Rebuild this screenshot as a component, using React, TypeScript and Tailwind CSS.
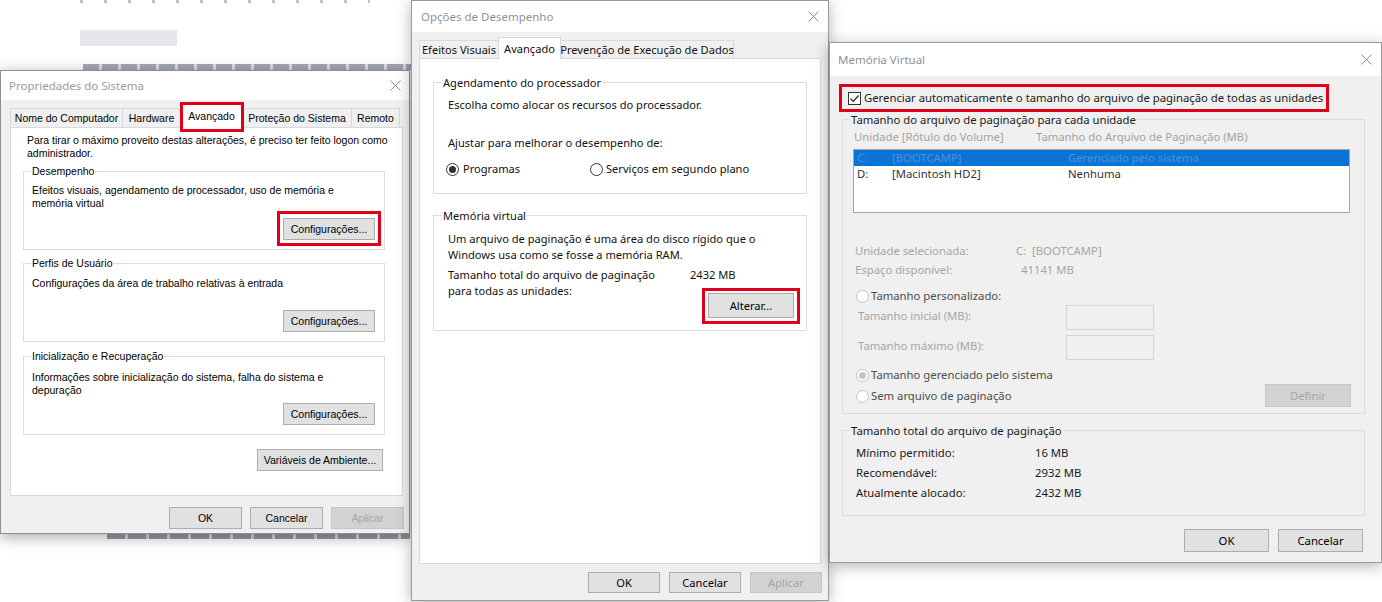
import React from "react";

function CloseX() {
  return (
    <svg width="11" height="11" viewBox="0 0 11 11" className="shrink-0">
      <path d="M0.5 0.5 L10.5 10.5 M10.5 0.5 L0.5 10.5" stroke="#8c8c8c" strokeWidth="1" fill="none" />
    </svg>
  );
}

function Btn({ children, className = "", disabled = false }: { children: React.ReactNode; className?: string; disabled?: boolean }) {
  return (
    <div
      className={`flex shrink-0 items-center justify-center border ${
        disabled ? "border-[#c6c6c6] bg-[#d2d2d2] text-[#a5a5a5]" : "border-[#adadad] bg-[#e1e1e1] text-black"
      } ${className}`}
    >
      {children}
    </div>
  );
}

// red annotation frame drawn over a control
function Highlight({ className }: { className: string }) {
  return <div className={`pointer-events-none absolute border-[3px] border-[#e1001a] ${className}`} />;
}

function Radio({ checked = false, disabled = false }: { checked?: boolean; disabled?: boolean }) {
  return (
    <span
      className={`flex h-[13px] w-[13px] shrink-0 items-center justify-center rounded-full border bg-white ${
        disabled ? "border-[#c4c4c4]" : "border-[#333333]"
      }`}
    >
      {checked && <span className={`h-[7px] w-[7px] rounded-full ${disabled ? "bg-[#c4c4c4]" : "bg-[#333333]"}`} />}
    </span>
  );
}

function Checkbox() {
  return (
    <span className="flex h-[13px] w-[13px] shrink-0 items-center justify-center border border-[#333333] bg-white">
      <svg width="11" height="11" viewBox="0 0 11 11">
        <path d="M1.5 5.5 L4.2 8.3 L9.5 2.5" stroke="#222" strokeWidth="1.2" fill="none" />
      </svg>
    </span>
  );
}

function Tab({ children, className = "" }: { children: React.ReactNode; className?: string }) {
  return (
    <div className={`flex shrink-0 items-center justify-center whitespace-nowrap border border-b-0 border-[#d9d9d9] bg-[#f0f0f0] ${className}`}>
      {children}
    </div>
  );
}

function SystemProperties() {
  return (
    <div className="absolute left-0 top-[70px] flex h-[464px] w-[410px] flex-col border border-[#8f8f8f] bg-[#f0f0f0] font-['Liberation_Sans',Arial,sans-serif] text-[10.5px] leading-[13px] text-black shadow-[0_3px_14px_rgba(0,0,0,0.35)]">
      <div className="flex h-[29px] shrink-0 items-center justify-between bg-white pl-[8px] pr-[8px]">
        <span className="font-['Noto_Sans',sans-serif] text-[11.5px] text-[#9b9b9b]">Propriedades do Sistema</span>
        <CloseX />
      </div>

      <div className="flex h-[27px] shrink-0 items-end pl-[9px]">
        <Tab className="h-[19px] w-[113px]">Nome do Computador</Tab>
        <Tab className="-ml-px h-[19px] w-[59px]">Hardware</Tab>
        <div className="relative z-10 -mb-px -ml-px flex h-[24px] w-[63px] shrink-0 items-center justify-center border border-b-0 border-[#d9d9d9] bg-white">
          Avançado
          <Highlight className="-bottom-[4px] -left-[1px] -right-[2px] -top-[3px]" />
        </div>
        <Tab className="-ml-px h-[19px] w-[110px]">Proteção do Sistema</Tab>
        <Tab className="-ml-px h-[19px] w-[49px]">Remoto</Tab>
      </div>

      <div className="ml-[9px] flex h-[369px] w-[393px] shrink-0 flex-col border border-[#d9d9d9] bg-white pt-[6px]">
        <p className="whitespace-nowrap pl-[16px]">
          Para tirar o máximo proveito destas alterações, é preciso ter feito logon como
          <br />
          administrador.
        </p>

        <div className="ml-[12px] mt-[11px] flex h-[79px] w-[362px] shrink-0 flex-col border border-[#dcdcdc]">
          <span className="-mt-[7px] ml-[7px] self-start bg-white px-px">Desempenho</span>
          <p className="mt-[6px] whitespace-nowrap pl-[8px]">
            Efeitos visuais, agendamento de processador, uso de memória e
            <br />
            memória virtual
          </p>
          <div className="relative mb-[9px] mr-[9px] mt-auto self-end">
            <Btn className="h-[22px] w-[92px]">Configurações...</Btn>
            <Highlight className="-bottom-[6px] -left-[6px] -right-[6px] -top-[7px]" />
          </div>
        </div>

        <div className="ml-[12px] mt-[13px] flex h-[79px] w-[362px] shrink-0 flex-col border border-[#dcdcdc]">
          <span className="-mt-[7px] ml-[7px] self-start bg-white px-px">Perfis de Usuário</span>
          <p className="mt-[7px] whitespace-nowrap pl-[8px]">Configurações da área de trabalho relativas à entrada</p>
          <Btn className="mb-[9px] mr-[9px] mt-auto h-[22px] w-[92px] self-end">Configurações...</Btn>
        </div>

        <div className="ml-[12px] mt-[14px] flex h-[79px] w-[362px] shrink-0 flex-col border border-[#dcdcdc]">
          <span className="-mt-[7px] ml-[7px] self-start bg-white px-px">Inicialização e Recuperação</span>
          <p className="mt-[8px] whitespace-nowrap pl-[8px]">
            Informações sobre inicialização do sistema, falha do sistema e
            <br />
            depuração
          </p>
          <Btn className="mb-[9px] mr-[9px] mt-auto h-[22px] w-[92px] self-end">Configurações...</Btn>
        </div>

        <Btn className="mr-[19px] mt-[14px] h-[22px] w-[126px] self-end">Variáveis de Ambiente...</Btn>
      </div>

      <div className="mt-[11px] flex justify-end gap-[8px] pr-[5px]">
        <Btn className="h-[22px] w-[73px]">OK</Btn>
        <Btn className="h-[22px] w-[73px]">Cancelar</Btn>
        <Btn disabled className="h-[22px] w-[73px]">Aplicar</Btn>
      </div>
    </div>
  );
}

function PerformanceOptions() {
  return (
    <div className="absolute left-[411px] top-0 flex h-[601px] w-[418px] flex-col border border-[#9a9a9a] bg-[#f0f0f0] font-['Noto_Sans',sans-serif] text-[11.1px] leading-[16px] text-[#111] shadow-[0_3px_14px_rgba(0,0,0,0.3)]">
      <div className="flex h-[31px] shrink-0 items-center justify-between bg-white pl-[9px] pr-[9px]">
        <span className="text-[11.5px] text-[#929292]">Opções de Desempenho</span>
        <CloseX />
      </div>

      <div className="flex h-[26px] shrink-0 items-end pl-[7px]">
        <Tab className="h-[18px] w-[80px]">Efeitos Visuais</Tab>
        <div className="relative z-10 -mb-px -ml-px flex h-[22px] w-[63px] shrink-0 items-center justify-center border border-b-0 border-[#d9d9d9] bg-white">
          Avançado
        </div>
        <Tab className="-ml-px h-[18px] w-[174px]">Prevenção de Execução de Dados</Tab>
      </div>

      <div className="ml-[7px] flex h-[506px] w-[402px] shrink-0 flex-col border border-[#d9d9d9] bg-white">
        <div className="ml-[13px] mt-[23px] flex h-[112px] w-[374px] shrink-0 flex-col border border-[#dcdcdc]">
          <span className="-mt-[8px] ml-[8px] self-start bg-white px-px">Agendamento do processador</span>
          <p className="mt-[6px] pl-[14px]">Escolha como alocar os recursos do processador.</p>
          <p className="mt-[22px] pl-[14px]">Ajustar para melhorar o desempenho de:</p>
          <div className="mt-[10px] flex h-[16px] items-center pl-[12px]">
            <div className="flex w-[144px] items-center gap-[4px]">
              <Radio checked />
              <span>Programas</span>
            </div>
            <div className="flex items-center gap-[3px]">
              <Radio />
              <span>Serviços em segundo plano</span>
            </div>
          </div>
        </div>

        <div className="ml-[13px] mt-[21px] flex h-[116px] w-[374px] shrink-0 flex-col border border-[#dcdcdc]">
          <span className="-mt-[8px] ml-[8px] self-start bg-white px-px">Memória virtual</span>
          <p className="mt-[7px] whitespace-nowrap pl-[14px]">
            Um arquivo de paginação é uma área do disco rígido que o
            <br />
            Windows usa como se fosse a memória RAM.
          </p>
          <div className="mt-[4px] flex pl-[14px]">
            <p className="w-[242px] shrink-0">
              Tamanho total do arquivo de paginação
              <br />
              para todas as unidades:
            </p>
            <div className="flex flex-col items-start">
              <span>2432 MB</span>
              <div className="relative ml-[18px] mt-[10px]">
                <Btn className="h-[25px] w-[86px]">Alterar...</Btn>
                <Highlight className="-bottom-[6px] -left-[6px] -right-[6px] -top-[5px]" />
              </div>
            </div>
          </div>
        </div>
      </div>

      <div className="mt-[8px] flex justify-end gap-[9px] pr-[6px]">
        <Btn className="h-[21px] w-[72px]">OK</Btn>
        <Btn className="h-[21px] w-[72px]">Cancelar</Btn>
        <Btn disabled className="h-[21px] w-[72px]">Aplicar</Btn>
      </div>
    </div>
  );
}

function VirtualMemory() {
  return (
    <div className="absolute left-[829px] top-[42px] flex h-[521px] w-[553px] flex-col border border-[#9a9a9a] bg-[#f0f0f0] font-['Noto_Sans',sans-serif] text-[11.3px] leading-[16px] text-[#1a1a1a] shadow-[0_3px_14px_rgba(0,0,0,0.3)]">
      <div className="flex h-[33px] shrink-0 items-center justify-between bg-white pl-[8px] pr-[9px]">
        <span className="text-[11.5px] text-[#929292]">Memória Virtual</span>
        <CloseX />
      </div>

      <div className="relative ml-[18px] mt-[14px] flex h-[16px] items-center gap-[3px] self-start">
        <Checkbox />
        <span className="whitespace-nowrap">Gerenciar automaticamente o tamanho do arquivo de paginação de todas as unidades</span>
        <Highlight className="-bottom-[6px] -left-[9px] -right-[6px] -top-[6px]" />
      </div>

      <div className="ml-[12px] mt-[13px] flex h-[295px] w-[523px] shrink-0 flex-col border border-[#dcdcdc]">
        <span className="-mt-[8px] ml-[7px] self-start bg-[#f0f0f0] px-px">Tamanho do arquivo de paginação para cada unidade</span>
        <div className="mt-[1px] flex pl-[11px] text-[#a3a3a3]">
          <span className="w-[182px] shrink-0">Unidade [Rótulo do Volume]</span>
          <span>Tamanho do Arquivo de Paginação (MB)</span>
        </div>
        <div className="ml-[10px] mt-[4px] flex h-[64px] w-[497px] shrink-0 flex-col border border-[#a6a6a6] bg-white">
          <div className="flex h-[16px] items-center bg-[#0a74d4] pl-[3px] text-[#4a92dc]">
            <span className="w-[35px] shrink-0">C:</span>
            <span className="w-[176px] shrink-0">[BOOTCAMP]</span>
            <span>Gerenciado pelo sistema</span>
          </div>
          <div className="flex h-[16px] items-center pl-[3px] text-[#333]">
            <span className="w-[35px] shrink-0">D:</span>
            <span className="w-[176px] shrink-0">[Macintosh HD2]</span>
            <span>Nenhuma</span>
          </div>
        </div>

        <div className="mt-[30px] flex pl-[12px] text-[#a5a5a5]">
          <span className="w-[161px] shrink-0">Unidade selecionada:</span>
          <span>C:&nbsp;&nbsp;[BOOTCAMP]</span>
        </div>
        <div className="mt-[3px] flex pl-[12px] text-[#a5a5a5]">
          <span className="w-[161px] shrink-0">Espaço disponível:</span>
          <span className="pl-[5px]">41141 MB</span>
        </div>

        <div className="mt-[10px] flex h-[16px] items-center gap-[2px] pl-[13px] text-[#4d4d4d]">
          <Radio disabled />
          <span>Tamanho personalizado:</span>
        </div>
        <div className="mt-[1px] flex h-[25px] items-center pl-[15px] text-[#a5a5a5]">
          <span className="-mt-[3px] w-[208px] shrink-0">Tamanho inicial (MB):</span>
          <div className="h-[25px] w-[88px] border border-[#d4d4d4] bg-[#f0f0f0]" />
        </div>
        <div className="mt-[5px] flex h-[25px] items-center pl-[15px] text-[#a5a5a5]">
          <span className="-mt-[3px] w-[208px] shrink-0">Tamanho máximo (MB):</span>
          <div className="h-[25px] w-[88px] border border-[#d4d4d4] bg-[#f0f0f0]" />
        </div>

        <div className="mt-[7px] flex items-start justify-between">
          <div className="flex flex-col pl-[13px] text-[#4d4d4d]">
            <div className="flex h-[16px] items-center gap-[2px]">
              <Radio checked disabled />
              <span>Tamanho gerenciado pelo sistema</span>
            </div>
            <div className="mt-[5px] flex h-[16px] items-center gap-[2px]">
              <Radio disabled />
              <span>Sem arquivo de paginação</span>
            </div>
          </div>
          <Btn disabled className="mr-[13px] mt-[17px] h-[23px] w-[86px]">
            Definir
          </Btn>
        </div>
      </div>

      <div className="ml-[12px] mt-[16px] flex h-[86px] w-[523px] shrink-0 flex-col border border-[#dcdcdc]">
        <span className="-mt-[8px] ml-[7px] self-start bg-[#f0f0f0] px-px">Tamanho total do arquivo de paginação</span>
        <div className="mt-[4px] flex flex-col pl-[13px]">
          <div className="flex h-[20px] items-center">
            <span className="w-[179px] shrink-0">Mínimo permitido:</span>
            <span>16 MB</span>
          </div>
          <div className="flex h-[20px] items-center">
            <span className="w-[179px] shrink-0">Recomendável:</span>
            <span>2932 MB</span>
          </div>
          <div className="flex h-[20px] items-center">
            <span className="w-[179px] shrink-0">Atualmente alocado:</span>
            <span>2432 MB</span>
          </div>
        </div>
      </div>

      <div className="mt-[13px] flex justify-end gap-[9px] pr-[18px]">
        <Btn className="h-[23px] w-[85px]">OK</Btn>
        <Btn className="h-[23px] w-[85px]">Cancelar</Btn>
      </div>
    </div>
  );
}

export default function App() {
  return (
    <div className="relative h-[602px] w-[1382px] overflow-hidden bg-white">
      {/* blurred article content behind the dialogs */}
      <div className="flex flex-col pl-[80px]">
        <div className="h-[3px] w-[290px] bg-[repeating-linear-gradient(90deg,#a8a8a8_0_3px,transparent_3px_24px)] opacity-70" />
        <div className="mt-[27px] h-[16px] w-[97px] bg-[#e6e6ee]" />
        <div className="ml-[3px] mt-[18px] h-[6px] w-[328px] bg-[repeating-linear-gradient(90deg,#a4a8b8_0_16px,#dcdee8_16px_19px)]" />
        <div className="ml-[27px] mt-[464px] h-[5px] w-[303px] bg-[repeating-linear-gradient(90deg,#9a9aa6_0_18px,#d8d8e0_18px_21px)]" />
      </div>

      <SystemProperties />
      <PerformanceOptions />
      <VirtualMemory />
    </div>
  );
}
